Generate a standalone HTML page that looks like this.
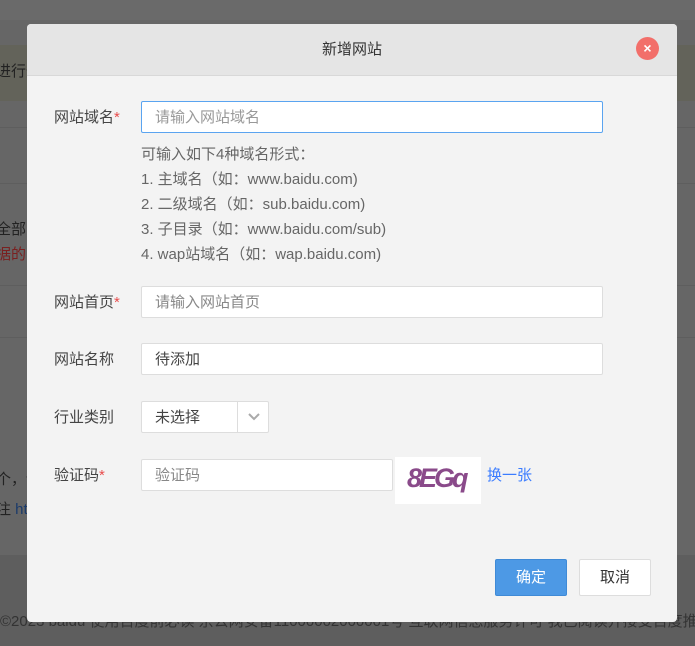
<!DOCTYPE html>
<html style="background:#666"><head><meta charset="utf-8"><style>
*{box-sizing:border-box;margin:0;padding:0}
html,body{background:#666}
body{width:695px;height:646px;font-family:"Liberation Sans","Noto Sans CJK SC",sans-serif;font-size:15px;position:relative;overflow:hidden;color:#333}
.bg{position:absolute;left:0;width:695px}
.modal{position:absolute;left:27px;top:24px;width:650px;height:598px;background:#f3f3f3;border-radius:4px;overflow:hidden}
.hd{height:52px;background:#e5e5e5;border-bottom:1px solid #d8d8d8;text-align:center;line-height:51px;font-size:15px;color:#333}
.close{position:absolute;left:609px;top:13px;width:23px;height:23px;border-radius:50%;background:#f26f6a;color:#fff;text-align:center;line-height:22px;font-size:14px;font-weight:bold}
.lbl{position:absolute;left:27px;color:#444;font-size:15px}
.lbl i{color:#e84c4c;font-style:normal}
.in{position:absolute;left:114px;height:32px;background:#fff;border:1px solid #ddd;border-radius:2px;padding-left:13px;line-height:31px;color:#888;font-size:15px}
.help{position:absolute;left:114px;top:118px;color:#666;font-size:15px;line-height:25px}
.btn{position:absolute;top:535px;width:72px;height:37px;border-radius:2px;text-align:center;line-height:35px;font-size:15px}
</style></head><body>
<div class="bg" style="top:0;height:646px;background:#666"></div>
<div class="bg" style="top:0;height:20px;background:#6a6a6a"></div>
<div class="bg" style="top:45px;height:56px;background:#63635a"></div>
<div class="bg" style="top:127px;height:1px;background:#5e5e5e"></div>
<div class="bg" style="top:183px;height:1px;background:#5e5e5e"></div>
<div class="bg" style="top:285px;height:1px;background:#5e5e5e"></div>
<div class="bg" style="top:337px;height:1px;background:#5e5e5e"></div>
<div class="bg" style="top:555px;height:91px;background:#5e5e5e"></div>
<div style="position:absolute;left:-4px;top:60px;color:#222">进行登</div>
<div style="position:absolute;left:-4px;top:218px;color:#222">全部的</div>
<div style="position:absolute;left:-4px;top:243px;color:#7a2020">据的网</div>
<div style="position:absolute;left:-4px;top:468px;color:#222">个，请</div>
<div style="position:absolute;left:-4px;top:498px;color:#222">注 <span style="color:#1a3a6a">htt</span></div>
<div style="position:absolute;left:0;top:610px;color:#333;white-space:nowrap">©2023 baidu 使用百度前必读 京公网安备11000002000001号 互联网信息服务许可 我已阅读并接受百度推</div>
<div class="modal">
<div class="hd">新增网站</div>
<div class="close">×</div>
<div class="lbl" style="top:82px">网站域名<i>*</i></div>
<div class="in" style="top:77px;width:462px;border-color:#5aa4f0;color:#999">请输入网站域名</div>
<div class="help">可输入如下4种域名形式：<br>1. 主域名（如：www.baidu.com)<br>2. 二级域名（如：sub.baidu.com)<br>3. 子目录（如：www.baidu.com/sub)<br>4. wap站域名（如：wap.baidu.com)</div>
<div class="lbl" style="top:267px">网站首页<i>*</i></div>
<div class="in" style="top:262px;width:462px">请输入网站首页</div>
<div class="lbl" style="top:324px">网站名称</div>
<div class="in" style="top:319px;width:462px;color:#444">待添加</div>
<div class="lbl" style="top:382px">行业类别</div>
<div class="in" style="top:377px;width:128px;color:#444">未选择<span style="position:absolute;left:95px;top:0;width:1px;height:30px;background:#ddd"></span><svg style="position:absolute;left:106px;top:11px" width="12" height="8" viewBox="0 0 12 8"><path d="M1 1l5 5 5-5" fill="none" stroke="#aaa" stroke-width="2"/></svg></div>
<div class="lbl" style="top:440px">验证码<i>*</i></div>
<div class="in" style="top:435px;width:252px">验证码</div>
<div style="position:absolute;left:368px;top:433px;width:86px;height:47px;background:#fff;overflow:hidden"><span style="position:absolute;left:12px;top:6px;font:italic bold 27px 'Liberation Sans';color:#8a4a8a;letter-spacing:-3px">8EGq</span></div>
<div style="position:absolute;left:460px;top:440px;color:#3b7cff">换一张</div>
<div class="btn" style="left:468px;background:#4d99e5;border:1px solid #3f8ad6;color:#fff">确定</div>
<div class="btn" style="left:552px;background:#fff;border:1px solid #ddd;color:#333">取消</div>
</div>
</body></html>
